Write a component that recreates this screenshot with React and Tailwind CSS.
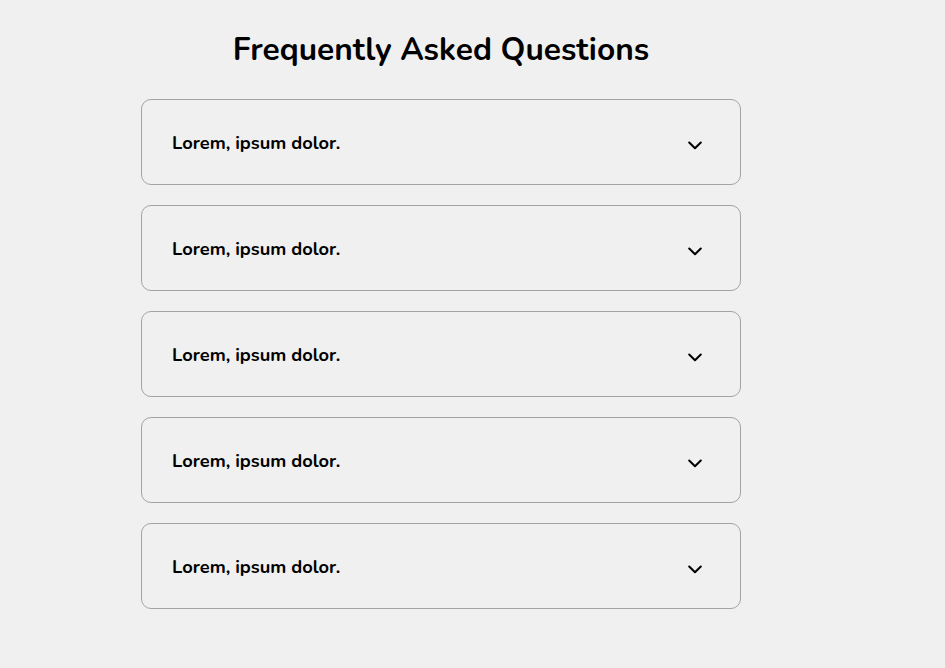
import React from 'react';

const questions = [1, 2, 3, 4, 5].map(id => ({ id, title: 'Lorem, ipsum dolor.' }));

const Chevron = () => (
  <svg width="14" height="9" viewBox="0 0 14 9" fill="none" className="mt-[6px]">
    <path d="M1.2 1.5 7 7.3l5.8-5.8" stroke="#000" strokeWidth="2" strokeLinecap="round" strokeLinejoin="round" />
  </svg>
);

const FaqItem = ({ title }) => (
  <div className="flex items-center justify-between h-[86px] pl-[30px] pr-[38px] border border-[#a3a3a3] rounded-[10px]">
    <span className="text-[18.3px] font-bold text-black mt-[3px]">{title}</span>
    <Chevron />
  </div>
);

export default function App() {
  return (
    <div className="min-h-[668px] bg-[#f0f0f0] font-['Nunito','Open_Sans',sans-serif]">
      <div className="w-[600px] ml-[141px] pt-[30px]">
        <h1 className="text-center text-[31.7px] font-bold text-black leading-[40px] mb-[29px]">
          Frequently Asked Questions
        </h1>
        <div className="flex flex-col gap-[20px]">
          {questions.map(q => (
            <FaqItem key={q.id} title={q.title} />
          ))}
        </div>
      </div>
    </div>
  );
}
